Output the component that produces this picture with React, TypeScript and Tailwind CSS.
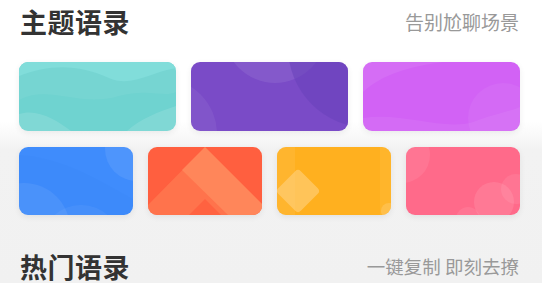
import { FC, ReactNode } from "react";

const Card: FC<{ bg: string; children?: ReactNode; w: number; h: number }> = ({ bg, children, w, h }) => (
  <div className={`relative overflow-hidden rounded-[9px] shadow-[0_2px_6px_rgba(0,0,0,0.07)] ${bg}`}>
    <svg className="absolute inset-0 w-full h-full" viewBox={`0 0 ${w} ${h}`} preserveAspectRatio="none">
      {children}
    </svg>
  </div>
);

const Header: FC<{ title: string; sub: string; subSize: string }> = ({ title, sub, subSize }) => (
  <div className="flex items-center justify-between h-[42px] pl-[1px] pr-[1px]">
    <h2 className="text-[27px] font-bold text-[#333] leading-none tracking-[0.5px]">{title}</h2>
    <span className={`${subSize} text-[#999] leading-none`}>{sub}</span>
  </div>
);

export default function App() {
  return (
    <div
      className="w-[542px] h-[283px] overflow-hidden bg-[linear-gradient(to_bottom,#ffffff_0px,#ffffff_122px,#f2f2f2_150px,#f1f1f1_100%)]"
      style={{ fontFamily: '"Noto Sans CJK SC", "Noto Sans", sans-serif' }}
    >
      <div className="pl-[19px] pr-[22px]">
        <Header title="主题语录" sub="告别尬聊场景" subSize="text-[19px]" />
        <div className="grid grid-cols-3 gap-[15px] mt-[20px] h-[69px]">
          <Card bg="bg-[#6fd3d0]" w={157} h={69}>
            <path d="M0 14 C30 2 60 2 90 16 C112 26 132 10 157 6 L157 0 L0 0 Z" fill="#7bdcd9" />
            <path d="M0 38 C30 22 60 46 100 34 C130 26 145 36 157 30 L157 0 L0 0 Z" fill="#ffffff" opacity="0.05" />
            <path d="M0 52 C18 46 38 58 52 69 L0 69 Z" fill="#ffffff" opacity="0.12" />
            <path d="M108 69 C122 56 140 50 157 44 L157 69 Z" fill="#ffffff" opacity="0.12" />
          </Card>
          <Card bg="bg-[#7a4bc7]" w={157} h={69}>
            <circle cx="-30" cy="72" r="56" fill="#ffffff" opacity="0.06" />
            <circle cx="84" cy="-30" r="51" fill="#ffffff" opacity="0.08" />
            <circle cx="178" cy="-15" r="81" fill="#6741ba" opacity="0.55" />
          </Card>
          <Card bg="bg-[#d262f5]" w={157} h={69}>
            <path d="M0 30 C20 12 45 5 80 0 L0 0 Z" fill="#ffffff" opacity="0.07" />
            <path d="M0 56 C40 50 80 69 110 60 C130 52 145 50 157 45 L157 69 L0 69 Z" fill="#ffffff" opacity="0.06" />
            <circle cx="140" cy="56" r="35" fill="#ffffff" opacity="0.05" />
          </Card>
        </div>
        <div className="grid grid-cols-4 gap-[15px] h-[68px] mt-[16px]">
          <Card bg="bg-[#3f8cfc]" w={114} h={68}>
            <path d="M0 8 C40 10 75 30 114 52 L114 68 L0 68 Z" fill="#2f7cf0" opacity="0.1" />
            <circle cx="5" cy="82" r="46" fill="#ffffff" opacity="0.07" />
            <circle cx="62" cy="98" r="40" fill="#ffffff" opacity="0.05" />
            <circle cx="118" cy="2" r="32" fill="#ffffff" opacity="0.08" />
          </Card>
          <Card bg="bg-[#ff5f3f]" w={114} h={68}>
            <path d="M0 58 L57 0 L114 57 L114 68 L0 68 Z" fill="#ff7a52" opacity="0.75" />
            <path d="M57 0 L34 23 L80 68 L114 68 L114 57 Z" fill="#ff8b5e" opacity="0.8" />
            <path d="M41 68 L57 52 L73 68 Z" fill="#ff6240" />
          </Card>
          <Card bg="bg-[#ffb01f]" w={114} h={68}>
            <rect x="0" y="0" width="18" height="68" fill="#ffc04a" opacity="0.35" />
            <rect x="103" y="0" width="11" height="68" fill="#ffc04a" opacity="0.3" />
            <rect x="5" y="28" width="32" height="32" rx="4" transform="rotate(45 21 44)" fill="#ffd07a" opacity="0.65" />
            <circle cx="112" cy="64" r="8" fill="#ffd07a" opacity="0.4" />
          </Card>
          <Card bg="bg-[#ff6a8a]" w={114} h={68}>
            <circle cx="-4" cy="8" r="28" fill="#ffffff" opacity="0.08" />
            <circle cx="88" cy="55" r="20" fill="#ffffff" opacity="0.1" />
            <circle cx="110" cy="42" r="15" fill="#ffffff" opacity="0.08" />
            <circle cx="62" cy="72" r="12" fill="#ffffff" opacity="0.08" />
          </Card>
        </div>
        <div className="mt-[30px]">
          <Header title="热门语录" sub="一键复制 即刻去撩" subSize="text-[18.5px]" />
        </div>
      </div>
    </div>
  );
}
